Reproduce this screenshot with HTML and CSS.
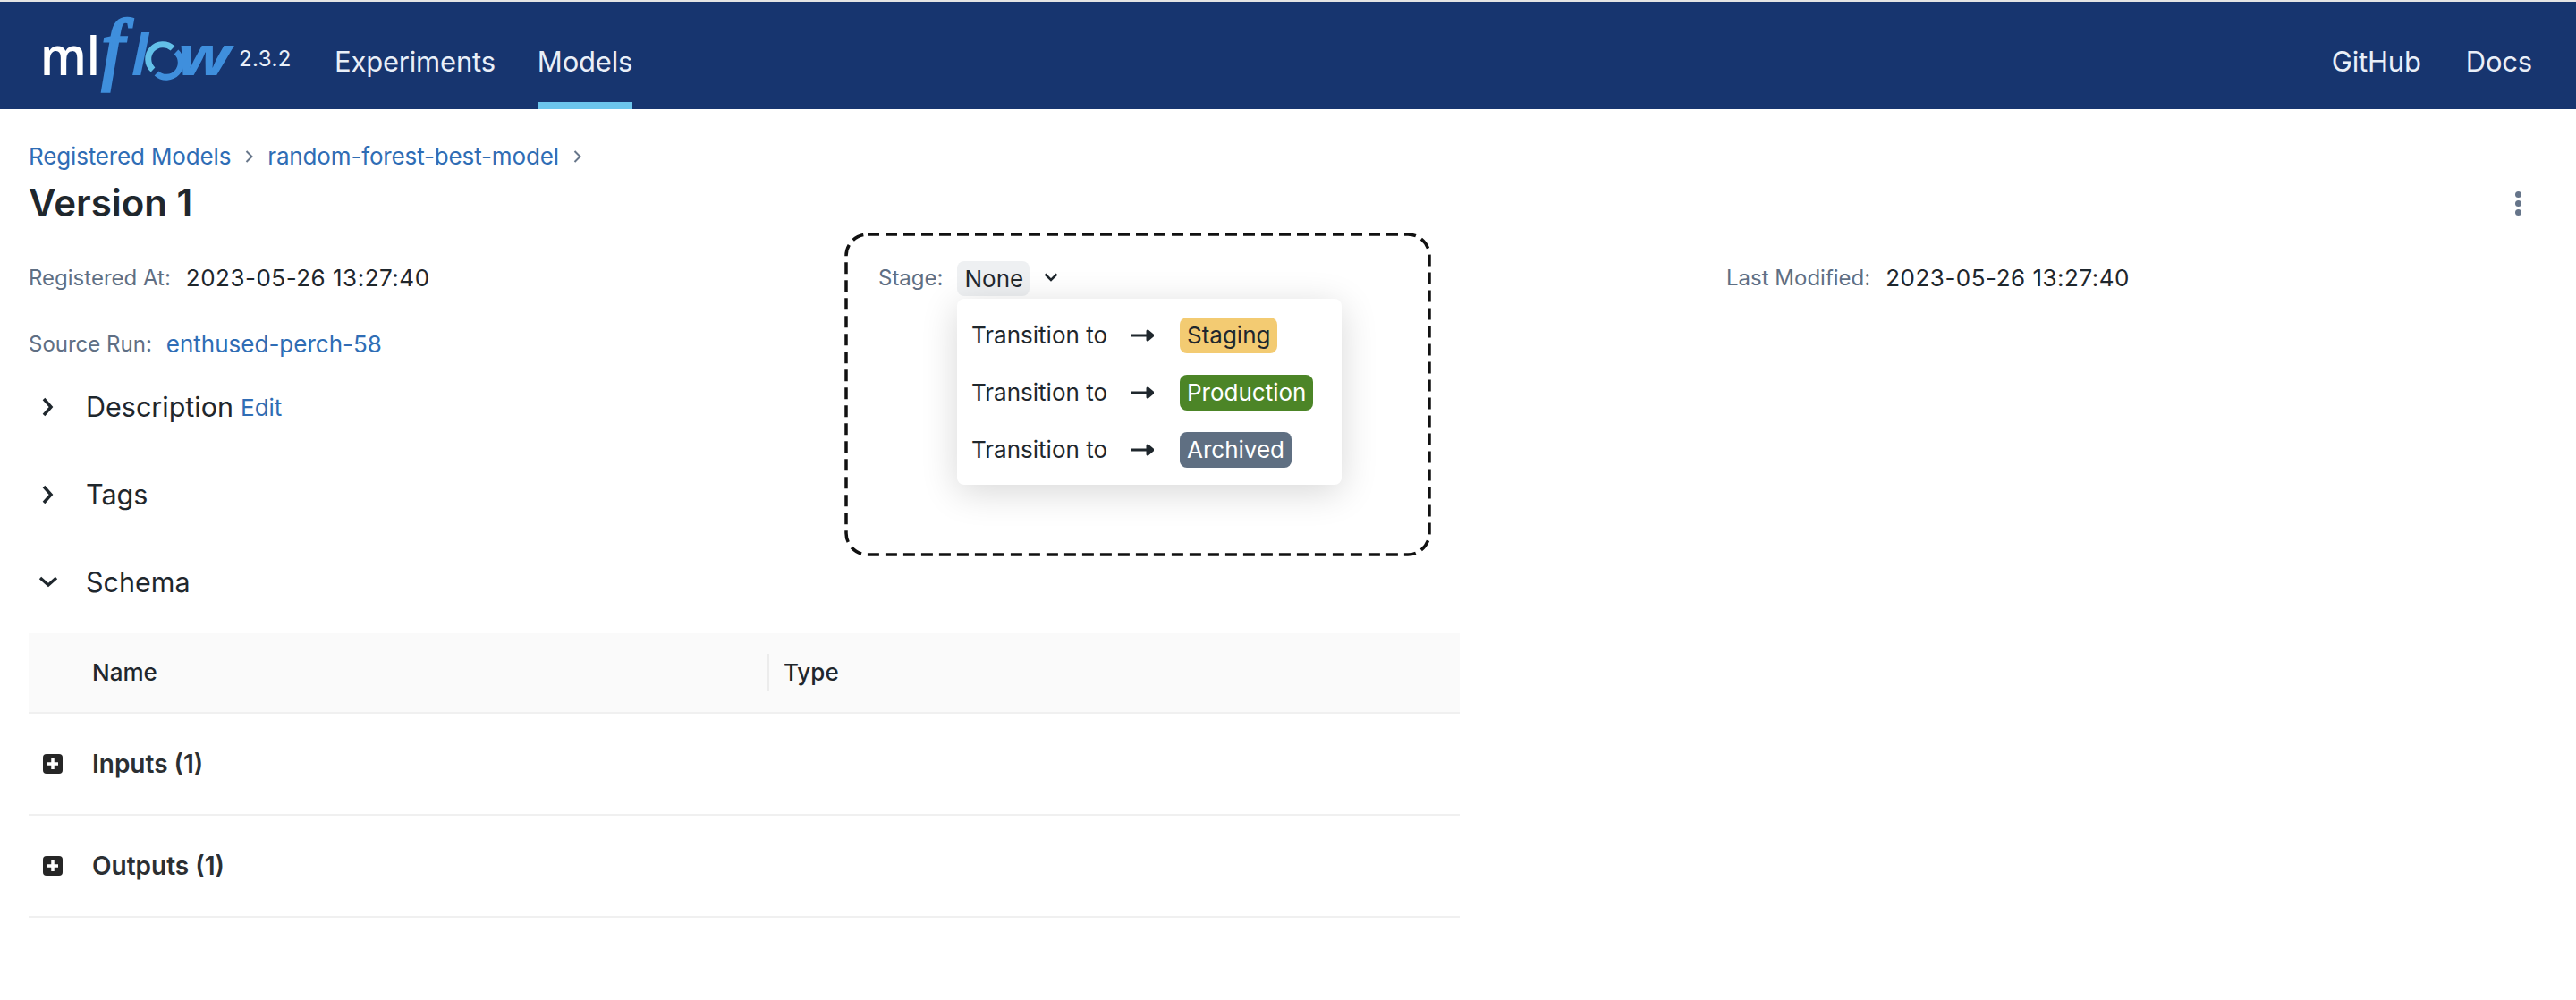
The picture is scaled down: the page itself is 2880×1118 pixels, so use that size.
FILE: index.html
```html
<!DOCTYPE html>
<html lang="en">
<head>
  <meta charset="UTF-8">
  <title>MLflow</title>
  <link rel="stylesheet" href="styles.css">
</head>
<body>

  <!-- Top bar -->
  <header class="topbar">
    <a class="logo" href="#">
      <svg class="logo-mark" width="212" height="84" viewBox="0 0 212 84">
        <text class="logo-ml" x="-2" y="62" textLength="67" lengthAdjust="spacingAndGlyphs">ml</text>
        <text class="logo-f" x="79" y="61" text-anchor="middle">f</text>
        <text class="logo-l" x="100" y="62">l</text>
        <g class="logo-o">
          <path class="logo-o-light" d="M124 56 A15 15 0 0 1 146 32"/>
          <path class="logo-o-dark" d="M150 36 A15 15 0 0 1 128 60"/>
        </g>
        <text class="logo-w" x="151" y="62" textLength="60" lengthAdjust="spacingAndGlyphs">w</text>
      </svg>
      <span class="version">2.3.2</span>
    </a>
    <nav class="nav">
      <a href="#">Experiments</a>
      <a class="active" href="#">Models</a>
    </nav>
    <nav class="nav nav-right">
      <a href="#">GitHub</a>
      <a href="#">Docs</a>
    </nav>
  </header>

  <main class="page">
    <div class="breadcrumb">
      <a href="#">Registered Models</a>
      <svg class="crumb-sep" width="9" height="16" viewBox="0 0 9 16"><path d="M1.5 2l6 6-6 6"/></svg>
      <a href="#">random-forest-best-model</a>
      <svg class="crumb-sep" width="9" height="16" viewBox="0 0 9 16"><path d="M1.5 2l6 6-6 6"/></svg>
    </div>

    <div class="title-row">
      <h1>Version 1</h1>
      <button class="more" type="button" aria-label="More"><span></span><span></span><span></span></button>
    </div>

    <!-- Metadata -->
    <div class="meta">
      <div class="meta-item">
        <span class="meta-label">Registered At:</span>
        <span class="date">2023-05-26 13:27:40</span>
      </div>
      <div class="meta-item stage">
        <span class="meta-label">Stage:</span>
        <span class="stage-pill">None</span>
        <svg class="stage-caret" width="16" height="10" viewBox="0 0 16 10"><path d="M1.5 1.5L8 8l6.5-6.5"/></svg>

        <div class="stage-menu">
          <div class="stage-row">
            <span>Transition to</span>
            <svg class="arrow" width="25" height="14" viewBox="0 0 25 14"><path d="M0 7h19M18 2l6 5-6 5z"/></svg>
            <span class="badge badge-staging">Staging</span>
          </div>
          <div class="stage-row">
            <span>Transition to</span>
            <svg class="arrow" width="25" height="14" viewBox="0 0 25 14"><path d="M0 7h19M18 2l6 5-6 5z"/></svg>
            <span class="badge badge-production">Production</span>
          </div>
          <div class="stage-row">
            <span>Transition to</span>
            <svg class="arrow" width="25" height="14" viewBox="0 0 25 14"><path d="M0 7h19M18 2l6 5-6 5z"/></svg>
            <span class="badge badge-archived">Archived</span>
          </div>
        </div>
      </div>
      <div class="meta-item">
        <span class="meta-label">Last Modified:</span>
        <span class="date">2023-05-26 13:27:40</span>
      </div>
      <div class="meta-item">
        <span class="meta-label">Source Run:</span>
        <a class="run-link" href="#">enthused-perch-58</a>
      </div>
    </div>

    <!-- Collapsible sections -->
    <section class="section first">
      <svg class="toggle" width="24" height="24" viewBox="0 0 24 24"><path d="M7 3l8 9-8 9"/></svg>
      <h2>Description</h2>
      <a class="edit" href="#">Edit</a>
    </section>
    <section class="section">
      <svg class="toggle" width="24" height="24" viewBox="0 0 24 24"><path d="M7 3l8 9-8 9"/></svg>
      <h2>Tags</h2>
    </section>
    <section class="section">
      <svg class="toggle" width="24" height="24" viewBox="0 0 24 24"><path d="M3 7l9 8 9-8"/></svg>
      <h2>Schema</h2>
    </section>

    <!-- Schema table -->
    <div class="schema">
      <div class="schema-head">
        <div class="col-name">Name</div>
        <div class="col-type">Type</div>
      </div>
      <div class="schema-row">
        <svg class="plus" width="22" height="22" viewBox="0 0 22 22"><rect width="22" height="22" rx="4"/><path d="M11 5v12M5 11h12"/></svg>
        <span>Inputs (1)</span>
      </div>
      <div class="schema-row">
        <svg class="plus" width="22" height="22" viewBox="0 0 22 22"><rect width="22" height="22" rx="4"/><path d="M11 5v12M5 11h12"/></svg>
        <span>Outputs (1)</span>
      </div>
    </div>
  </main>

  <!-- Dashed highlight drawn over the stage dropdown -->
  <svg class="highlight" width="656" height="362" viewBox="0 0 656 362">
    <rect x="2" y="2" width="652" height="358" rx="24"/>
  </svg>

</body>
</html>
```

FILE: styles.css
```css
* {
  box-sizing: border-box;
}

body {
  margin: 0;
  position: relative;
  height: 1118px;
  overflow: hidden;
  background: #fff;
  color: #1f272d;
  font-family: Inter, "Liberation Sans", sans-serif;
  font-size: 26px;
  line-height: 36px;
}

a {
  color: #2f6db5;
  text-decoration: none;
}

/* Top bar */
.topbar {
  display: flex;
  height: 122px;
  padding: 0 49px 0 47px;
  background: #17356f;
  border-top: 2px solid #e4e4e4;
}

.logo {
  display: flex;
  align-items: flex-start;
  width: 327px;
}

.logo-mark {
  flex: none;
  margin-top: 20px;
  overflow: visible;
}

.logo-ml {
  fill: #fff;
  font-family: "Open Sans", sans-serif;
  font-size: 60px;
  font-weight: 600;
}

.logo-f {
  fill: #3f8fdd;
  font-family: "Liberation Serif", serif;
  font-size: 88px;
  font-style: italic;
  stroke: #3f8fdd;
  stroke-width: 3.500px;
}

.logo-l,
.logo-w {
  fill: #3f8fdd;
  font-family: "Open Sans", sans-serif;
  font-size: 62px;
  font-style: italic;
  font-weight: 700;
}

.logo-w {
  font-size: 60px;
}

.logo-o path {
  fill: none;
  stroke-width: 7px;
}

.logo-o-light {
  stroke: #63c0e8;
}

.logo-o-dark {
  stroke: #3f8fdd;
}

.version {
  margin: 47px 0 0 8px;
  color: #e9eff8;
  font-size: 24px;
  line-height: 34px;
  letter-spacing: 0.4px;
}

.nav {
  display: flex;
  gap: 47px;
}

.nav a {
  display: flex;
  align-items: center;
  padding-top: 21px;
  color: #e9eff8;
  font-size: 31px;
  letter-spacing: -0.2px;
  border-bottom: 8px solid transparent;
}

.nav a.active {
  border-bottom-color: #6cc5ec;
}

.nav-right {
  margin-left: auto;
  gap: 50px;
}

/* Page */
.page {
  padding: 35px 32px 0;
}

.breadcrumb {
  display: flex;
  align-items: center;
  gap: 16px;
  letter-spacing: -0.15px;
}

.crumb-sep path {
  fill: none;
  stroke: #67768a;
  stroke-width: 2px;
}

.title-row {
  display: flex;
  justify-content: space-between;
  align-items: center;
  margin-top: 6px;
}

h1 {
  margin: 0;
  font-size: 42px;
  font-weight: 600;
  line-height: 56px;
}

.more {
  display: flex;
  flex-direction: column;
  gap: 3px;
  margin-right: 29px;
  padding: 0;
  background: none;
  border: none;
}

.more span {
  width: 7px;
  height: 7px;
  background: #66758a;
  border-radius: 50%;
}

/* Metadata grid */
.meta {
  display: grid;
  grid-template-columns: repeat(3, 949px);
  row-gap: 38px;
  margin-top: 38px;
}

.meta-item {
  display: flex;
  align-items: center;
  gap: 17px;
  height: 36px;
}

.meta-label {
  color: #5f6f84;
  font-size: 24px;
}

.date {
  letter-spacing: 0.5px;
}

.run-link {
  margin-left: -1px;
}

.stage {
  position: relative;
  padding-left: 1px;
  gap: 16px;
}

.stage-pill {
  padding: 0 7px 0 8px;
  line-height: 39px;
  background: #eef0f2;
  border-radius: 8px;
}

.stage-caret {
  margin-top: -3px;
}

.stage-caret path {
  fill: none;
  stroke: #1f272d;
  stroke-width: 2.500px;
}

.stage-menu {
  position: absolute;
  top: 41px;
  left: 89px;
  display: flex;
  flex-direction: column;
  gap: 24px;
  width: 430px;
  padding: 20px 16px;
  background: #fff;
  border-radius: 8px;
  box-shadow: 0 8px 40px rgba(0, 0, 0, 0.16);
}

.stage-row {
  display: flex;
  align-items: center;
  height: 40px;
  padding-top: 1px;
}

.arrow {
  margin: 0 29px 0 27px;
}

.arrow path {
  fill: #1f272d;
  stroke: #1f272d;
  stroke-width: 3px;
  stroke-linejoin: round;
}

.badge {
  padding: 0 8px;
  line-height: 40px;
  border-radius: 8px;
}

.badge-staging {
  background: #f3cb72;
}

.badge-production {
  background: #4c8527;
  color: #fff;
}

.badge-archived {
  background: #5f6f82;
  color: #fff;
}

/* Sections */
.section {
  display: flex;
  align-items: center;
  height: 50px;
  margin-top: 48px;
}

.section.first {
  margin-top: 27px;
}

.toggle {
  flex: none;
  margin: 0 30px 0 10px;
}

.toggle path {
  fill: none;
  stroke: #1f272d;
  stroke-width: 3.500px;
}

h2 {
  margin: 0;
  font-size: 30.500px;
  font-weight: 400;
}

.edit {
  margin: 2px 0 0 8px;
}

/* Schema table */
.schema {
  width: 1600px;
  margin-top: 32px;
  font-weight: 500;
}

.schema-head {
  display: flex;
  align-items: center;
  height: 90px;
  background: #fafafa;
  border-bottom: 2px solid #f0f0f0;
}

.col-name {
  width: 826px;
  padding-left: 71px;
}

.col-type {
  height: 42px;
  padding-left: 16px;
  line-height: 42px;
  border-left: 2px solid #ececec;
}

.schema-row {
  display: flex;
  align-items: center;
  gap: 33px;
  height: 114px;
  padding-left: 16px;
  color: #2b2f33;
  font-size: 28px;
  font-weight: 600;
  border-bottom: 2px solid #f0f0f0;
}

.plus rect {
  fill: #262626;
}

.plus path {
  fill: none;
  stroke: #fff;
  stroke-width: 3.500px;
}

/* Dashed highlight */
.highlight {
  position: absolute;
  top: 260px;
  left: 944px;
  pointer-events: none;
}

.highlight rect {
  fill: none;
  stroke: #111;
  stroke-width: 3.500px;
  stroke-dasharray: 13 7;
}
```
